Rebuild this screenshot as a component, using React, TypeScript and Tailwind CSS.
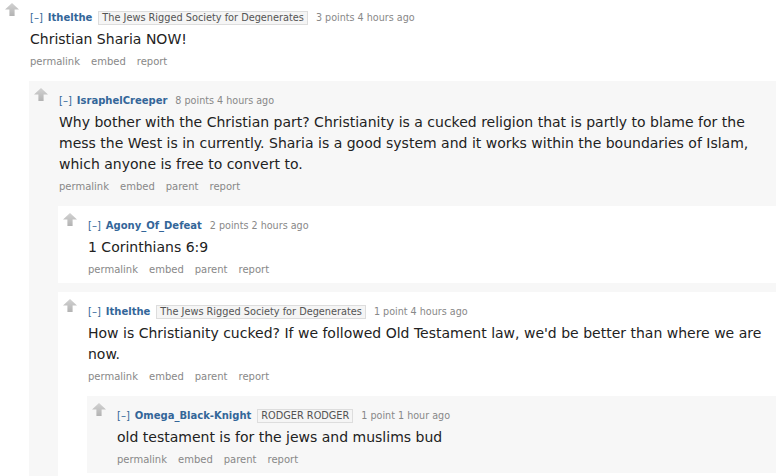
import type { ReactNode } from "react";

interface CommentData {
    author: string;
    flair?: string;
    score: string;
    age: string;
    body: string;
    buttons: string[];
    replies?: CommentData[];
}

const thread: CommentData = {
    author: "Ithelthe",
    flair: "The Jews Rigged Society for Degenerates",
    score: "3 points",
    age: "4 hours ago",
    body: "Christian Sharia NOW!",
    buttons: ["permalink", "embed", "report"],
    replies: [
        {
            author: "IsraphelCreeper",
            score: "8 points",
            age: "4 hours ago",
            body: "Why bother with the Christian part? Christianity is a cucked religion that is partly to blame for the mess the West is in currently. Sharia is a good system and it works within the boundaries of Islam, which anyone is free to convert to.",
            buttons: ["permalink", "embed", "parent", "report"],
            replies: [
                {
                    author: "Agony_Of_Defeat",
                    score: "2 points",
                    age: "2 hours ago",
                    body: "1 Corinthians 6:9",
                    buttons: ["permalink", "embed", "parent", "report"],
                },
                {
                    author: "Ithelthe",
                    flair: "The Jews Rigged Society for Degenerates",
                    score: "1 point",
                    age: "4 hours ago",
                    body: "How is Christianity cucked? If we followed Old Testament law, we'd be better than where we are now.",
                    buttons: ["permalink", "embed", "parent", "report"],
                    replies: [
                        {
                            author: "Omega_Black-Knight",
                            flair: "RODGER RODGER",
                            score: "1 point",
                            age: "1 hour ago",
                            body: "old testament is for the jews and muslims bud",
                            buttons: ["permalink", "embed", "parent", "report"],
                        },
                    ],
                },
            ],
        },
    ],
};

function UpArrow() {
    return (
        <svg width="14" height="13" viewBox="0 0 14 13">
            <defs>
                <linearGradient id="arrowGrad" x1="0" y1="0" x2="0" y2="1">
                    <stop offset="0" stopColor="#d2d2d2" />
                    <stop offset="1" stopColor="#b3b3b3" />
                </linearGradient>
            </defs>
            <path d="M7 0 L14 6.5 L9.6 6.5 L9.6 13 L4.4 13 L4.4 6.5 L0 6.5 Z" fill="url(#arrowGrad)" />
        </svg>
    );
}

function Comment({ c, depth }: { c: CommentData; depth: number }) {
    const isTop = depth === 0;
    const bg = depth % 2 === 1 ? "bg-[#f7f7f7]" : "bg-white";

    let replies: ReactNode = null;
    if (c.replies) {
        replies = (
            <div className="-ml-px mt-[12px] flex flex-col gap-[9px]">
                {c.replies.map((r, i) => (
                    <Comment key={i} c={r} depth={depth + 1} />
                ))}
            </div>
        );
    }

    return (
        <div className={`flex ${bg} ${isTop ? "" : "pb-[6px]"}`}>
            <div className={`w-[30px] shrink-0 pl-[5px] ${isTop ? "pt-[3px]" : "pt-[7px]"}`}>
                <UpArrow />
            </div>
            <div className={`min-w-0 flex-1 ${isTop ? "pt-[10px]" : "pt-[12px]"}`}>
                <div className="flex items-center text-[10px] leading-[15px] text-[#888]">
                    <span className="text-[#369]">[–]</span>
                    <span className="ml-[5px] font-bold text-[#369]">{c.author}</span>
                    {c.flair && (
                        <span className="ml-[6px] border border-[#ddd] bg-[#f5f5f5] px-[3px] text-[9.75px] leading-[12px] text-[#545454]">
                            {c.flair}
                        </span>
                    )}
                    <span className="ml-[8px] text-[9.6px]">
                        {c.score} {c.age}
                    </span>
                </div>
                <p className="mt-[4px] pr-[8px] text-[14px] leading-[21px] text-[#222]">{c.body}</p>
                <div className="mt-[4px] flex gap-[11px] text-[10px] leading-[15px] text-[#888]">
                    {c.buttons.map((b) => (
                        <span key={b}>{b}</span>
                    ))}
                </div>
                {replies}
            </div>
        </div>
    );
}

export default function App() {
    return (
        <div className="h-[476px] w-[776px] overflow-hidden bg-white font-['DejaVu_Sans',Verdana,sans-serif]">
            <Comment c={thread} depth={0} />
        </div>
    );
}
